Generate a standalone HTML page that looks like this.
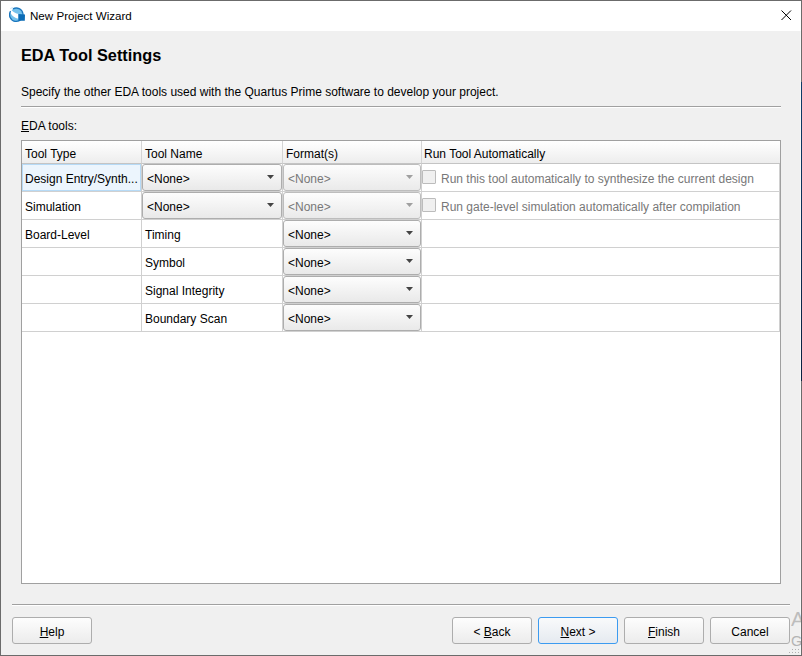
<!DOCTYPE html>
<html><head><meta charset="utf-8">
<style>
*{margin:0;padding:0;box-sizing:border-box}
html,body{width:802px;height:656px;overflow:hidden;background:#f0f0f0;font-family:"Liberation Sans",sans-serif;font-size:12px;color:#000}
.a{position:absolute}
.t{position:absolute;white-space:nowrap;line-height:14px}
#win{position:absolute;left:0;top:0;width:802px;height:656px;border:1px solid #6b6b6b;background:#f0f0f0}
#title{position:absolute;left:1px;top:1px;width:800px;height:30px;background:#fff}
.sep{position:absolute;height:2px;border-top:1px solid #a0a0a0;border-bottom:1px solid #fff}
#tbl{position:absolute;left:21px;top:140px;width:760px;height:444px;border:1px solid #a0a0a0;background:#fff}
.hdr{position:absolute;top:141px;height:23px;background:linear-gradient(#ffffff,#ededed);border-bottom:1px solid #c4c4c4;border-right:1px solid #d4d4d4}
.hl{position:absolute;background:#d0d0d0}
.gl{position:absolute;background:#d0d0d0}
.combo{position:absolute;height:27px;border:1px solid #adadad;border-radius:3px;background:linear-gradient(#fdfdfd,#e9e9e9)}
.combo .arr{position:absolute;right:7px;top:10px;width:7px;height:4px;background:#444;clip-path:polygon(0 0,100% 0,50% 100%)}
.dis{color:#787878}
.dis .arr{background:#a0a0a0}
.combo.dis{border-color:#bdbdbd;background:linear-gradient(#fdfdfd,#eaeaea)}
.chk{position:absolute;width:14px;height:14px;border-radius:1px;border:1px solid #bcbcbc;background:#f0f0f0}
.btn{position:absolute;top:617px;width:80px;height:27px;border:1px solid #adadad;border-radius:3px;background:linear-gradient(#fdfdfd,#ececec);text-align:center;line-height:25px;padding-top:2px}
.btn.def{border-color:#3c9bf0;background:linear-gradient(#f9fafb,#e5eaf0)}
u{text-decoration:underline;text-decoration-thickness:1px;text-underline-offset:1px}
</style></head><body>
<div id="win"></div>
<div id="title"></div>
<svg class="a" style="left:9px;top:7px" width="17" height="16" viewBox="0 0 17 16">
  <circle cx="7.1" cy="7.9" r="6.7" fill="#74c1ec"/>
  <path d="M1.4 1.7 C3 4 6 6.2 9.4 7.1 L9.4 11.8 C6 10.8 3 9 1.8 6.5 C1.2 5.5 1 4.5 1.0 3.7 Z" fill="#fff"/>
  <path d="M1.6 4.2 A6.7 6.7 0 1 0 4 1.9" fill="none" stroke="#1a76bd" stroke-width="1.3"/>
  <path d="M1.2 2 C2 1 3 0.6 4 0.7" stroke="#c4e3f5" stroke-width="1" fill="none"/>
  <path d="M9.4 7.1 L16 7.5 L15.8 13.8 L9.4 13.8 Z" fill="#0b6bb5"/>
</svg>
<div class="t" style="left:30px;top:9px;font-size:11.6px">New Project Wizard</div>
<svg class="a" style="left:780px;top:9px" width="12" height="12" viewBox="0 0 12 12"><path d="M1.5 1.5L11 11M11 1.5L1.5 11" stroke="#000" stroke-width="1"/></svg>
<div class="a" style="left:800px;top:31px;width:1px;height:624px;background:#f8f8f8"></div>
<div class="a" style="left:801px;top:82px;width:1px;height:299px;background:linear-gradient(#0e3c68,#0a2240)"></div>

<div class="t" style="left:21px;top:46px;font-size:16.3px;font-weight:bold;line-height:18px">EDA Tool Settings</div>
<div class="t" style="left:21px;top:85px">Specify the other EDA tools used with the Quartus Prime software to develop your project.</div>
<div class="sep" style="left:21px;top:106px;width:760px"></div>
<div class="t" style="left:21px;top:119px"><u>E</u>DA tools:</div>

<div id="tbl"></div>
<div class="hdr" style="left:22px;width:120px"></div>
<div class="hdr" style="left:142px;width:141px"></div>
<div class="hdr" style="left:283px;width:139px"></div>
<div class="hdr" style="left:422px;width:358px;border-right:none"></div>
<div class="t" style="left:25px;top:147px">Tool Type</div>
<div class="t" style="left:145px;top:147px">Tool Name</div>
<div class="t" style="left:286px;top:147px">Format(s)</div>
<div class="t" style="left:424px;top:147px">Run Tool Automatically</div>

<!-- grid lines -->
<div class="gl" style="left:141px;top:164px;width:1px;height:168px"></div>
<div class="gl" style="left:282px;top:164px;width:1px;height:168px"></div>
<div class="gl" style="left:421px;top:164px;width:1px;height:168px"></div>
<div class="gl" style="left:779px;top:164px;width:1px;height:168px"></div>
<div class="gl" style="left:22px;top:191px;width:758px;height:1px"></div>
<div class="gl" style="left:22px;top:219px;width:758px;height:1px"></div>
<div class="gl" style="left:22px;top:247px;width:758px;height:1px"></div>
<div class="gl" style="left:22px;top:275px;width:758px;height:1px"></div>
<div class="gl" style="left:22px;top:303px;width:758px;height:1px"></div>
<div class="gl" style="left:22px;top:331px;width:758px;height:1px"></div>

<!-- selected cell -->
<div class="a" style="left:22px;top:164px;width:119px;height:27px;background:#ecf5fd;border:1px solid #b6daf6"></div>

<div class="t" style="left:25px;top:172px">Design Entry/Synth...</div>
<div class="t" style="left:25px;top:200px">Simulation</div>
<div class="t" style="left:25px;top:228px">Board-Level</div>
<div class="t" style="left:145px;top:228px">Timing</div>
<div class="t" style="left:145px;top:256px">Symbol</div>
<div class="t" style="left:145px;top:284px">Signal Integrity</div>
<div class="t" style="left:145px;top:312px">Boundary Scan</div>

<div class="combo" style="left:142px;top:164px;width:140px"><div class="t" style="left:4px;top:7px">&lt;None&gt;</div><div class="arr"></div></div>
<div class="combo" style="left:142px;top:192px;width:140px"><div class="t" style="left:4px;top:7px">&lt;None&gt;</div><div class="arr"></div></div>
<div class="combo dis" style="left:283px;top:164px;width:138px"><div class="t" style="left:4px;top:7px">&lt;None&gt;</div><div class="arr"></div></div>
<div class="combo dis" style="left:283px;top:192px;width:138px"><div class="t" style="left:4px;top:7px">&lt;None&gt;</div><div class="arr"></div></div>
<div class="combo" style="left:283px;top:220px;width:138px"><div class="t" style="left:4px;top:7px">&lt;None&gt;</div><div class="arr"></div></div>
<div class="combo" style="left:283px;top:248px;width:138px"><div class="t" style="left:4px;top:7px">&lt;None&gt;</div><div class="arr"></div></div>
<div class="combo" style="left:283px;top:276px;width:138px"><div class="t" style="left:4px;top:7px">&lt;None&gt;</div><div class="arr"></div></div>
<div class="combo" style="left:283px;top:304px;width:138px"><div class="t" style="left:4px;top:7px">&lt;None&gt;</div><div class="arr"></div></div>

<div class="chk" style="left:422px;top:170px"></div>
<div class="t dis" style="left:441px;top:172px">Run this tool automatically to synthesize the current design</div>
<div class="chk" style="left:422px;top:198px"></div>
<div class="t dis" style="left:441px;top:200px">Run gate-level simulation automatically after compilation</div>

<div class="sep" style="left:12px;top:604px;width:778px"></div>
<div class="btn" style="left:12px"><u>H</u>elp</div>
<div class="btn" style="left:452px">&lt; <u>B</u>ack</div>
<div class="btn def" style="left:538px"><u>N</u>ext &gt;</div>
<div class="btn" style="left:624px"><u>F</u>inish</div>
<div class="btn" style="left:710px">Cancel</div>
<div class="a" style="left:791px;top:606px;width:10px;height:49px;overflow:hidden">
<div class="t" style="left:0;top:2px;font-size:20.5px;line-height:22px;color:#bdbdbd">A</div>
<div class="t" style="left:0;top:27px;font-size:14.5px;line-height:16px;color:#b4b4b4">G</div>
</div>
<svg class="a" style="left:788px;top:648px" width="12" height="6" viewBox="0 0 12 6" shape-rendering="crispEdges">
<rect x="4" y="1" width="1" height="1" fill="#b0b0b0"/><rect x="7" y="1" width="1" height="1" fill="#b0b0b0"/><rect x="10" y="1" width="1" height="1" fill="#b0b0b0"/>
<rect x="1" y="4" width="1" height="1" fill="#b0b0b0"/><rect x="4" y="4" width="1" height="1" fill="#b0b0b0"/><rect x="7" y="4" width="1" height="1" fill="#b0b0b0"/><rect x="10" y="4" width="1" height="1" fill="#b0b0b0"/>
</svg>
</body></html>
